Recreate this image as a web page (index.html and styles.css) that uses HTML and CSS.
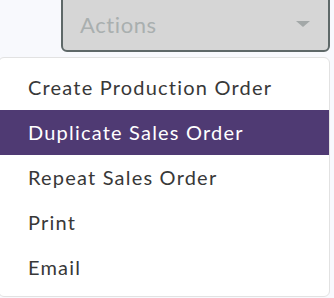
FILE: index.html
```html
<!DOCTYPE html>
<html>
<head>
	<meta charset="utf-8">
	<title>Actions</title>
	<link rel="stylesheet" href="styles.css">
</head>
<body>
	<div class="bar">
		<div class="select">
			<span class="label">Actions</span>
			<span class="caret"></span>
		</div>
	</div>
	<ul class="menu">
		<li>Create Production Order</li>
		<li class="active">Duplicate Sales Order</li>
		<li>Repeat Sales Order</li>
		<li>Print</li>
		<li>Email</li>
	</ul>
</body>
</html>
```

FILE: styles.css
```css
*{
	box-sizing: border-box;
}
body{
	margin: 0;
	background: #f8f9fd;
	font-family: Lato, "Liberation Sans", sans-serif;
	color: #333;
}
.bar{
	display: flex;
	justify-content: flex-end;
	padding-right: 4px;
	margin-top: -12px;
}
.select{
	width: 269px;
	height: 64px;
	padding: 8px 18px 0 17px;
	display: flex;
	align-items: center;
	justify-content: space-between;
	background: #d6d6d6;
	border: 2px solid #5e6868;
	border-radius: 6px;
}
.label{
	font-size: 22px;
	letter-spacing: 0.6px;
	color: #a9afaf;
}
.caret{
	width: 0;
	height: 0;
	border-left: 7px solid transparent;
	border-right: 7px solid transparent;
	border-top: 6px solid #a3a8a8;
}
.menu{
	list-style: none;
	margin: 5px 4px 0 -2px;
	padding: 7px 0 6px 0;
	background: #fff;
	border: 1px solid #e2e2e2;
	border-radius: 6px;
}
.menu li{
	height: 45px;
	line-height: 45px;
	padding-left: 29px;
	font-size: 20px;
	letter-spacing: 1.2px;
	color: #383838;
}
.menu li.active{
	background: #4f3a73;
	color: #fff;
}
```
